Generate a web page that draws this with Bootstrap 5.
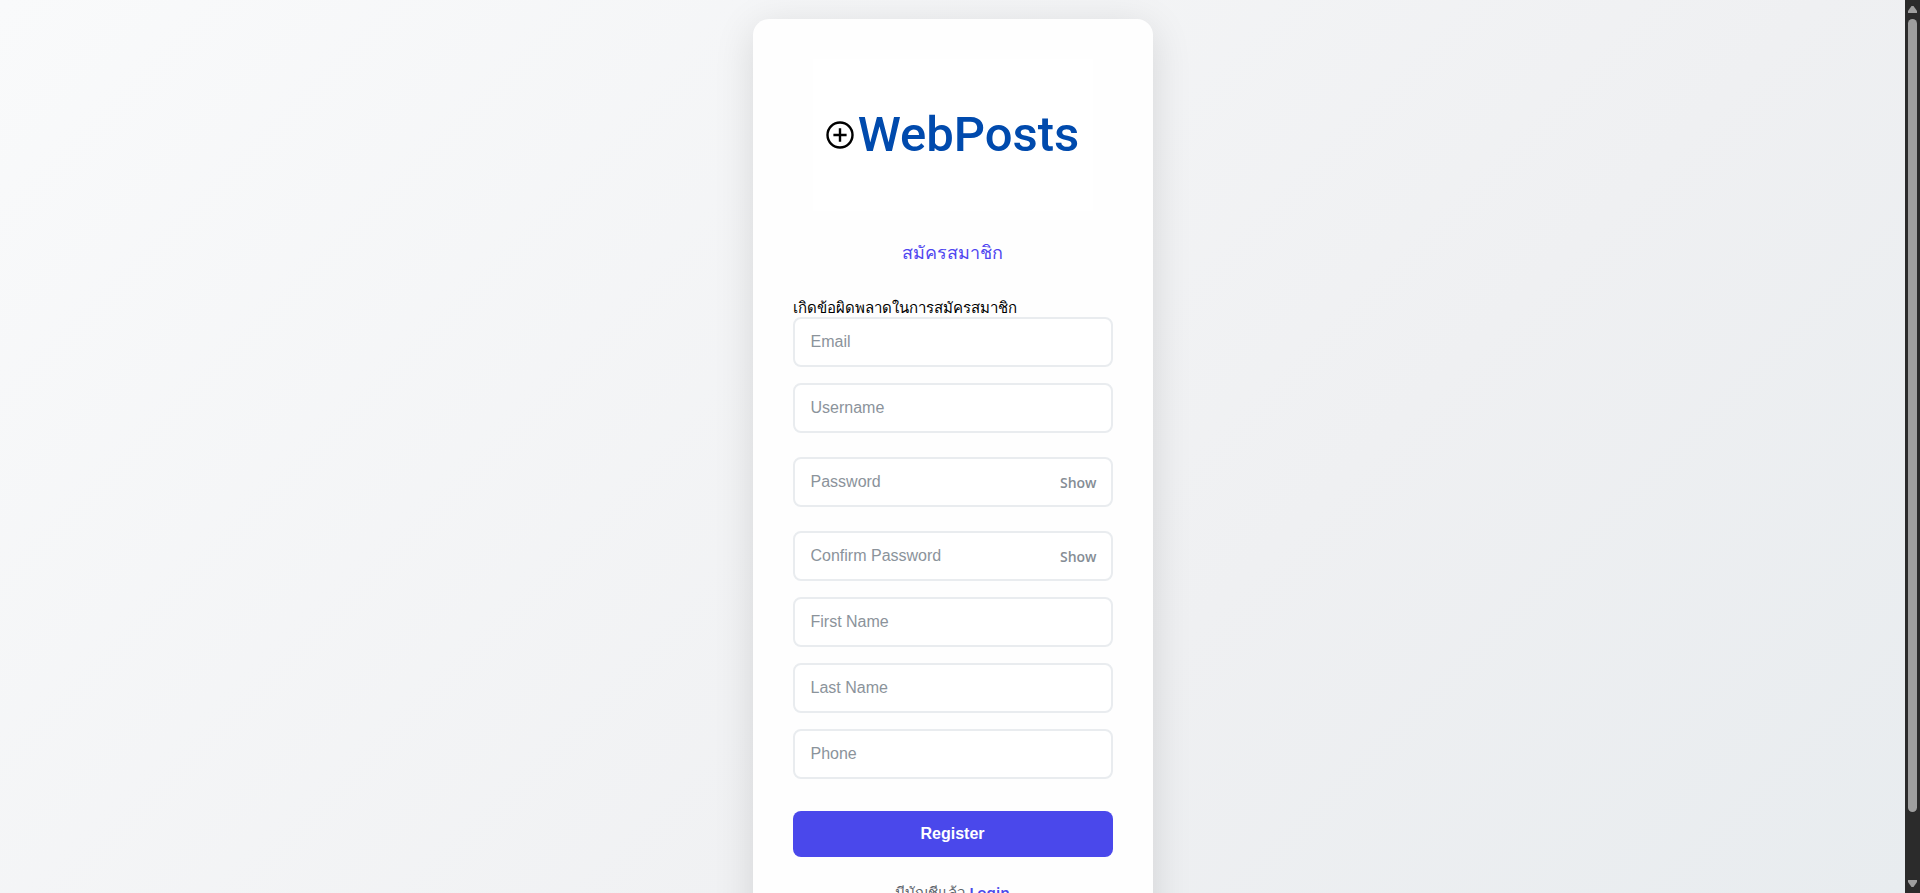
<!DOCTYPE html>
<html lang="th">
<head>
<meta charset="utf-8">
<meta name="viewport" content="width=device-width, initial-scale=1">
<title>WebPosts - Register</title>
<link href="https://cdn.jsdelivr.net/npm/bootstrap@5.3.0/dist/css/bootstrap.min.css" rel="stylesheet">
<style>
  body { font-family: "Noto Sans", "Open Sans", sans-serif; color: #000; }
  .page-area { background: linear-gradient(135deg, #f9fafb 0%, #eff0f2 65%, #e8ecef 100%); padding-top: 19px; }
  .register-card { max-width: 400px; padding: 40px; border-radius: 16px; background: #fefefe; box-shadow: 0 8px 40px rgba(0, 0, 0, .12); }
  .logo-box { width: 280px; height: 152px; background: #fff; }
  .logo-name { font: 500 49px/56px Roboto, sans-serif; color: #004aad; }
  .register-title { margin-bottom: 28px; font-size: 18px; line-height: 34px; color: #5046f0; }
  .error-text { font-size: 15px; line-height: 20px; }
  .field { height: 50px; padding: 0 16px; border: 2px solid #e9ecef; border-radius: 8px; background: #fff; font: 16px/24px "Liberation Sans", Arial, sans-serif; }
  .field::placeholder { color: #8b939b; }
  .fields { gap: 16px; }
  .field-secret { margin-top: 8px; }
  .show-btn { right: 16px; padding: 2px 0 0; font: 600 14px/20px "Open Sans", "Noto Sans", sans-serif; color: #858d95; }
  .register-btn { height: 46px; margin-top: 32px; border-radius: 8px; background: #4a48eb; color: #fff; font: 700 16px/24px "Liberation Sans", Arial, sans-serif; }
  .register-btn:hover { background: #3d3bd6; color: #fff; }
  .login-line { margin-top: 23px; font-size: 15px; line-height: 24px; color: #5f666d; }
  .login-line a { color: #4a48eb; font-weight: 600; }
  .scroll-rail { width: 15px; background: #2b2b2b; padding: 6px 0; gap: 6px; }
  .scroll-thumb { width: 9px; border-radius: 5px; background: #9f9f9f; flex: 0 0 90%; }
</style>
</head>
<body>
<div class="d-flex vh-100 overflow-hidden">
  <main class="page-area flex-grow-1 d-flex justify-content-center align-items-start">
    <section class="register-card w-100">
      <div class="logo-box mx-auto mb-4 d-flex align-items-center justify-content-center">
        <svg width="28" height="28" viewBox="0 0 28 28" fill="none" stroke="#000" aria-hidden="true">
          <circle cx="14" cy="14" r="12.5" stroke-width="2.4"/>
          <path d="M14 7.2v13.6M7.4 14h13.2" stroke-width="2.4"/>
        </svg>
        <span class="logo-name ms-1">WebPosts</span>
      </div>
      <h1 class="register-title text-center">สมัครสมาชิก</h1>
      <form>
        <div class="error-text" role="alert">เกิดข้อผิดพลาดในการสมัครสมาชิก</div>
        <div class="fields d-flex flex-column">
          <input class="field w-100" type="email" placeholder="Email" aria-label="Email">
          <input class="field w-100" type="text" placeholder="Username" aria-label="Username">
          <div class="field-secret position-relative">
            <input class="field w-100" type="password" placeholder="Password" aria-label="Password">
            <button type="button" class="show-btn btn border-0 position-absolute top-50 translate-middle-y">Show</button>
          </div>
          <div class="field-secret position-relative">
            <input class="field w-100" type="password" placeholder="Confirm Password" aria-label="Confirm Password">
            <button type="button" class="show-btn btn border-0 position-absolute top-50 translate-middle-y">Show</button>
          </div>
          <input class="field w-100" type="text" placeholder="First Name" aria-label="First Name">
          <input class="field w-100" type="text" placeholder="Last Name" aria-label="Last Name">
          <input class="field w-100" type="tel" placeholder="Phone" aria-label="Phone">
        </div>
        <button type="submit" class="register-btn btn w-100 border-0">Register</button>
      </form>
      <p class="login-line text-center mb-0">มีบัญชีแล้ว <a href="#" class="text-decoration-none">Login</a></p>
    </section>
  </main>
  <div class="scroll-rail flex-shrink-0 d-flex flex-column align-items-center" aria-hidden="true">
    <svg class="flex-shrink-0" width="9" height="7" viewBox="0 0 9 7" fill="#9f9f9f"><path d="M3.5 0h2L9 5v2H0V5z"/></svg>
    <div class="scroll-thumb"></div>
    <svg class="flex-shrink-0 mt-auto" width="9" height="7" viewBox="0 0 9 7" fill="#9f9f9f"><path d="M0 0h9v2L5.500 7h-2L0 2z"/></svg>
  </div>
</div>
<script src="https://cdn.jsdelivr.net/npm/bootstrap@5.3.0/dist/js/bootstrap.bundle.min.js"></script>
</body>
</html>
